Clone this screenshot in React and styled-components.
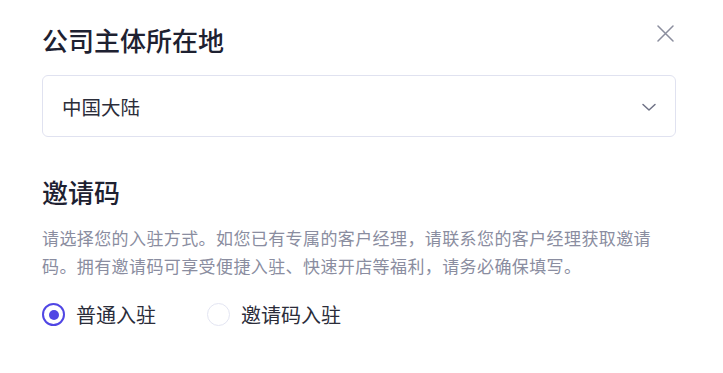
import React, { useState } from 'react';
import styled, { createGlobalStyle } from 'styled-components';

const GlobalStyle = createGlobalStyle`
    body {
        margin: 0;
        background: #fff;
        font-family: 'Noto Sans CJK SC', 'Noto Sans', sans-serif;
    }
`;

const Page = styled.div`
    width: 634px;
    padding: 22px 0 0 42px;
`;
const Header = styled.div`
    display: flex;
    justify-content: space-between;
    align-items: flex-start;
    height: 36px;
`;
const Title = styled.h2`
    margin: 0;
    font-size: 26px;
    line-height: 36px;
    font-weight: 500;
    color: #1e2131;
`;
const CloseButton = styled.button`
    display: flex;
    align-items: center;
    justify-content: center;
    width: 20px;
    height: 20px;
    margin: 1px 1px 0 0;
    padding: 0;
    border: none;
    background: none;
    cursor: pointer;
    color: #8b8e9e;
`;
const Select = styled.div`
    display: flex;
    align-items: center;
    justify-content: space-between;
    box-sizing: border-box;
    height: 62px;
    margin-top: 17px;
    padding: 0 18px 0 19px;
    border: 1px solid #e0e2f0;
    border-radius: 6px;
    font-size: 19.5px;
    color: #2b2d3a;
    svg {
        margin-top: 3px;
    }
`;
const Section = styled.div`
    margin-top: 37px;
`;
const Desc = styled.p`
    margin: 14px 0 0 0;
    width: 622px;
    font-size: 17px;
    letter-spacing: 0.4px;
    line-height: 28px;
    color: #8a8da0;
`;
const RadioGroup = styled.div`
    display: flex;
    align-items: center;
    gap: 51px;
    margin-top: 20px;
`;
const RadioLabel = styled.label`
    display: flex;
    align-items: center;
    gap: 11px;
    font-size: 20px;
    color: #2b2d3a;
    cursor: pointer;
`;
const Circle = styled.span`
    box-sizing: border-box;
    width: 23px;
    height: 23px;
    border-radius: 50%;
    border: ${(p) => (p.$checked ? '2.5px solid #5046e4' : '1.5px solid #e3e5f2')};
    display: flex;
    align-items: center;
    justify-content: center;
    &::after {
        content: '';
        display: ${(p) => (p.$checked ? 'block' : 'none')};
        width: 10px;
        height: 10px;
        border-radius: 50%;
        background: #5046e4;
    }
`;

const Radio = ({ checked, onClick, children }) => (
    <RadioLabel onClick={onClick}>
        <Circle $checked={checked} />
        {children}
    </RadioLabel>
);

export default function App() {
    const [mode, setMode] = useState('normal');
    return (
        <Page>
            <GlobalStyle />
            <Header>
                <Title>公司主体所在地</Title>
                <CloseButton>
                    <svg width="17" height="17" viewBox="0 0 17 17" fill="none" stroke="currentColor" strokeWidth="1.5" strokeLinecap="round">
                        <path d="M1 1L16 16M16 1L1 16" />
                    </svg>
                </CloseButton>
            </Header>
            <Select>
                <span>中国大陆</span>
                <svg width="16" height="9" viewBox="0 0 16 9" fill="none" stroke="#6e7185" strokeWidth="1.5" strokeLinecap="round" strokeLinejoin="round">
                    <path d="M2 1.5L8 7L14 1.5" />
                </svg>
            </Select>
            <Section>
                <Title>邀请码</Title>
                <Desc>
                    请选择您的入驻方式。如您已有专属的客户经理，请联系您的客户经理获取邀请码。拥有邀请码可享受便捷入驻、快速开店等福利，请务必确保填写。
                </Desc>
                <RadioGroup>
                    <Radio checked={mode === 'normal'} onClick={() => setMode('normal')}>普通入驻</Radio>
                    <Radio checked={mode === 'invite'} onClick={() => setMode('invite')}>邀请码入驻</Radio>
                </RadioGroup>
            </Section>
        </Page>
    );
}
